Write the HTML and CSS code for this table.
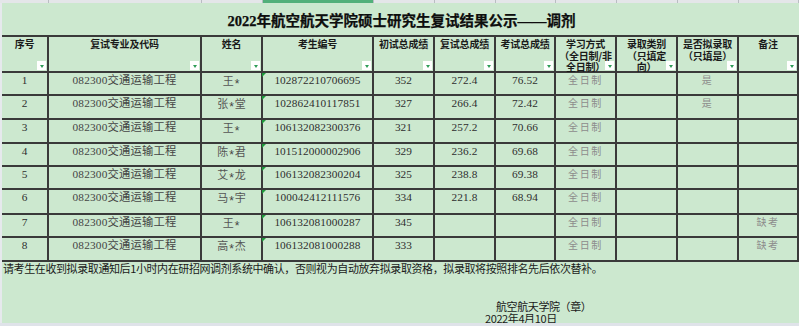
FILE: index.html
```html
<!DOCTYPE html>
<html lang="zh-CN">
<head>
<meta charset="utf-8">
<title>2022年航空航天学院硕士研究生复试结果公示——调剂</title>
<link rel="stylesheet" href="styles.css">
</head>
<body>
<div class="screen">
  <div class="colhdr">
    <div class="ch"></div><div class="ch"></div><div class="ch"></div><div class="ch sel"></div><div class="ch"></div><div class="ch"></div><div class="ch"></div><div class="ch"></div><div class="ch"></div><div class="ch"></div><div class="ch"></div>
  </div>
  <div class="main">
    <div class="rowhdr"></div>
    <div class="sheet">
      <div class="title">2022年航空航天学院硕士研究生复试结果公示——调剂</div>

      <div class="th">序号<span class="flt"></span></div>
      <div class="th">复试专业及代码<span class="flt"></span></div>
      <div class="th">姓名<span class="flt"></span></div>
      <div class="th">考生编号<span class="flt"></span></div>
      <div class="th">初试总成绩<span class="flt"></span></div>
      <div class="th">复试总成绩<span class="flt"></span></div>
      <div class="th">考试总成绩<span class="flt"></span></div>
      <div class="th">学习方式<br>（全日制/非<br>全日制）<span class="flt"></span></div>
      <div class="th">录取类别<br>（只填定<br>向）<span class="flt"></span></div>
      <div class="th">是否拟录取<br>（只填是）<span class="flt"></span></div>
      <div class="th">备注<span class="flt"></span></div>

      <div class="td num">1</div><div class="td major">082300交通运输工程</div><div class="td name">王<span class="ast">*</span></div><div class="td num id">102872210706695</div><div class="td num">352</div><div class="td num">272.4</div><div class="td num">76.52</div><div class="td soft">全日制</div><div class="td"></div><div class="td soft">是</div><div class="td"></div>

      <div class="td num">2</div><div class="td major">082300交通运输工程</div><div class="td name">张<span class="ast">*</span>堂</div><div class="td num id">102862410117851</div><div class="td num">327</div><div class="td num">266.4</div><div class="td num">72.42</div><div class="td soft">全日制</div><div class="td"></div><div class="td soft">是</div><div class="td"></div>

      <div class="td num">3</div><div class="td major">082300交通运输工程</div><div class="td name">王<span class="ast">*</span></div><div class="td num id">106132082300376</div><div class="td num">321</div><div class="td num">257.2</div><div class="td num">70.66</div><div class="td soft">全日制</div><div class="td"></div><div class="td"></div><div class="td"></div>

      <div class="td num">4</div><div class="td major">082300交通运输工程</div><div class="td name">陈<span class="ast">*</span>君</div><div class="td num id">101512000002906</div><div class="td num">329</div><div class="td num">236.2</div><div class="td num">69.68</div><div class="td soft">全日制</div><div class="td"></div><div class="td"></div><div class="td"></div>

      <div class="td num">5</div><div class="td major">082300交通运输工程</div><div class="td name">艾<span class="ast">*</span>龙</div><div class="td num id">106132082300204</div><div class="td num">325</div><div class="td num">238.8</div><div class="td num">69.38</div><div class="td soft">全日制</div><div class="td"></div><div class="td"></div><div class="td"></div>

      <div class="td num">6</div><div class="td major">082300交通运输工程</div><div class="td name">马<span class="ast">*</span>宇</div><div class="td num id">100042412111576</div><div class="td num">334</div><div class="td num">221.8</div><div class="td num">68.94</div><div class="td soft">全日制</div><div class="td"></div><div class="td"></div><div class="td"></div>

      <div class="td num">7</div><div class="td major">082300交通运输工程</div><div class="td name">王<span class="ast">*</span></div><div class="td num id">106132081000287</div><div class="td num">345</div><div class="td num"></div><div class="td num"></div><div class="td soft">全日制</div><div class="td"></div><div class="td"></div><div class="td soft">缺考</div>

      <div class="td num">8</div><div class="td major">082300交通运输工程</div><div class="td name">高<span class="ast">*</span>杰</div><div class="td num id">106132081000288</div><div class="td num">333</div><div class="td num"></div><div class="td num"></div><div class="td soft">全日制</div><div class="td"></div><div class="td"></div><div class="td soft">缺考</div>

      <div class="footer">
        <div class="note">请考生在收到拟录取通知后1小时内在研招网调剂系统中确认，否则视为自动放弃拟录取资格，拟录取将按照排名先后依次替补。</div>
        <div class="sign">航空航天学院（章）</div>
        <div class="date">2022年4月10日</div>
      </div>
    </div>
  </div>
  <div class="bottom"></div>
</div>
</body>
</html>
```
FILE: styles.css
```css
html, body {
  margin: 0;
  padding: 0;
  background: #cce8cf;
}
body {
  width: 799px;
  height: 326px;
  overflow: hidden;
}
.screen {
  width: 799px;
  height: 326px;
  display: flex;
  flex-direction: column;
  overflow: hidden;
}
.colhdr {
  height: 3px;
  flex: none;
  display: grid;
  grid-template-columns: 49px 153px 61px 111px 61px 61px 60px 61px 61px 61px 1fr;
  background: #e4e6e9;
}
.ch {
  border-right: 1px solid #b9bdc2;
}
.ch.sel {
  background: #52b07a;
}
.main {
  display: flex;
  flex: none;
  height: 320px;
}
.rowhdr {
  width: 2px;
  flex: none;
  background: #e6e9ed;
}
.sheet {
  flex: 1;
  display: grid;
  grid-template-columns: 47px 153px 61px 111px 61px 61px 60px 61px 61px 61px 1fr;
  grid-template-rows: 34px 36px 23px 24px 24px 23px 23px 25px 23px 24px 61px;
  background: #cce8cf;
  color: #2a2a2a;
}
.title {
  grid-column: 1 / -1;
  border-bottom: 2px solid #3a3a3a;
  display: flex;
  align-items: center;
  justify-content: center;
  font-family: "Liberation Serif", "Noto Sans CJK SC", serif;
  font-weight: 700;
  font-size: 14.5px;
  color: #0d0d0d;
  padding-left: 2px;
  -webkit-text-stroke: 0.25px #0d0d0d;
}
.th, .td {
  box-sizing: border-box;
  border-right: 2px solid #3a3a3a;
  border-bottom: 2px solid #3a3a3a;
  text-align: center;
  position: relative;
  white-space: nowrap;
}
.th {
  font-family: "Noto Sans CJK SC", sans-serif;
  font-weight: 700;
  font-size: 10px;
  line-height: 11.5px;
  padding-top: 1px;
  color: #1a1a1a;
  letter-spacing: -0.2px;
}
.flt {
  position: absolute;
  right: 1px;
  bottom: 1px;
  width: 9px;
  height: 9px;
  background: #fff;
  display: flex;
  align-items: center;
  justify-content: center;
}
.flt::after {
  content: "";
  width: 0;
  height: 0;
  margin-top: 1px;
  border-left: 2.5px solid transparent;
  border-right: 2.5px solid transparent;
  border-top: 3px solid #2f9c58;
}
.td {
  font-family: "Liberation Serif", "Noto Sans CJK SC", serif;
  font-size: 11.3px;
  line-height: 14px;
  padding-top: 0;
}
.num {
  color: #2e2e2e;
  letter-spacing: 0.1px;
}
.major {
  color: #444;
  letter-spacing: 0.2px;
}
.name {
  font-family: "Noto Sans CJK SC", sans-serif;
  font-size: 11px;
  color: #555;
}
.ast {
  font-family: "Liberation Sans", sans-serif;
  font-size: 12px;
  vertical-align: -3px;
  margin: 0 1px;
  color: #444;
}
.soft {
  font-family: "Noto Sans CJK SC", sans-serif;
  font-size: 10px;
  letter-spacing: 1.6px;
  color: #8c8c8c;
}
.id::before {
  content: "";
  position: absolute;
  left: -1px;
  top: 0;
  width: 0;
  height: 0;
  border-top: 4px solid #1e9a3c;
  border-right: 4px solid transparent;
}
.footer {
  grid-column: 1 / -1;
  display: flex;
  flex-direction: column;
  font-family: "Noto Sans CJK SC", sans-serif;
  font-size: 11px;
  letter-spacing: -0.4px;
  color: #1a1a1a;
  line-height: 12px;
}
.note {
  padding-left: 1px;
  white-space: nowrap;
}
.sign {
  margin-top: 26px;
  padding-left: 494px;
  white-space: nowrap;
}
.date {
  padding-left: 483px;
  white-space: nowrap;
}
.bottom {
  height: 3px;
  flex: none;
  background: #dfe3e9;
}
```
